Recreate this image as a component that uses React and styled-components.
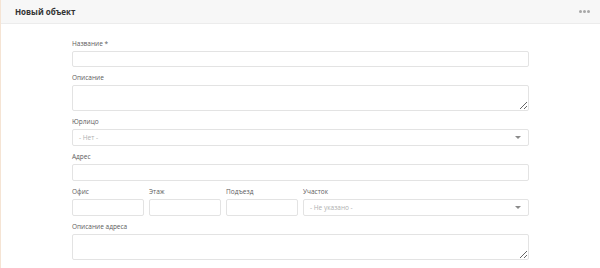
import styled, { createGlobalStyle } from 'styled-components';

const GlobalStyle = createGlobalStyle`
  html, body {
    margin: 0;
    padding: 0;
    background: #fff;
  }
  body {
    font-family: 'Open Sans', 'Noto Sans', sans-serif;
    color: #555;
  }
`;

const Card = styled.section`
  width: 600px;
  height: 268px;
  box-sizing: border-box;
  border-left: 1px solid #f5e4d4;
  overflow: hidden;
  background: #fff;
`;

const Header = styled.header`
  height: 24px;
  box-sizing: border-box;
  display: flex;
  align-items: center;
  justify-content: space-between;
  padding: 0 10px 0 14px;
  background: #f7f7f7;
  border-bottom: 1px solid #ececec;
`;

const Title = styled.h3`
  margin: 0;
  font-size: 8px;
  font-weight: 700;
  color: #333;
`;

const Dots = styled.div`
  display: flex;
  gap: 1px;
  span {
    width: 3px;
    height: 3px;
    border-radius: 50%;
    background: #a8a8a8;
  }
`;

const Form = styled.form`
  width: 457px;
  margin: 0 auto 0 71px;
  padding-top: 16px;
  display: flex;
  flex-direction: column;
  gap: 7px;
`;

const Field = styled.div`
  display: flex;
  flex-direction: column;
  min-width: 0;
`;

const Label = styled.label`
  font-size: 6.5px;
  line-height: 8px;
  color: #5c5c5c;
  margin-bottom: 3px;
  white-space: nowrap;
`;

const Input = styled.input`
  width: 100%;
  min-width: 0;
  height: ${({ h }) => h || 16}px;
  box-sizing: border-box;
  border: 1px solid #e3e3e3;
  border-radius: 2px;
  background: #fff;
  padding: 0 5px;
  font: inherit;
  font-size: 7px;
  outline: none;
`;

const TextArea = styled.textarea`
  height: 26px;
  box-sizing: border-box;
  border: 1px solid #e3e3e3;
  border-radius: 2px;
  background: #fff;
  padding: 3px 5px;
  font: inherit;
  font-size: 7px;
  outline: none;
  resize: vertical;
`;

const Select = styled.div`
  height: 17px;
  box-sizing: border-box;
  border: 1px solid #e3e3e3;
  border-radius: 2px;
  background: #fff;
  display: flex;
  align-items: center;
  justify-content: space-between;
  padding: 0 7px 0 6px;
  font-size: 6.5px;
  color: #b0b0b0;

  &::after {
    content: '';
    border-left: 3px solid transparent;
    border-right: 3px solid transparent;
    border-top: 3px solid #8a8a8a;
  }
`;

const Row = styled.div`
  display: grid;
  grid-template-columns: repeat(3, 72px) minmax(0, 1fr);
  column-gap: 5px;
`;

export default function App() {
  return (
    <>
      <GlobalStyle />
      <Card>
        <Header>
          <Title>Новый объект</Title>
          <Dots>
            <span />
            <span />
            <span />
          </Dots>
        </Header>
        <Form>
          <Field>
            <Label>Название *</Label>
            <Input />
          </Field>
          <Field>
            <Label>Описание</Label>
            <TextArea />
          </Field>
          <Field>
            <Label>Юрлицо</Label>
            <Select>- Нет -</Select>
          </Field>
          <Field>
            <Label>Адрес</Label>
            <Input h={17} />
          </Field>
          <Row>
            <Field>
              <Label>Офис</Label>
              <Input h={17} />
            </Field>
            <Field>
              <Label>Этаж</Label>
              <Input h={17} />
            </Field>
            <Field>
              <Label>Подъезд</Label>
              <Input h={17} />
            </Field>
            <Field>
              <Label>Участок</Label>
              <Select>- Не указано -</Select>
            </Field>
          </Row>
          <Field>
            <Label>Описание адреса</Label>
            <TextArea />
          </Field>
        </Form>
      </Card>
    </>
  );
}
